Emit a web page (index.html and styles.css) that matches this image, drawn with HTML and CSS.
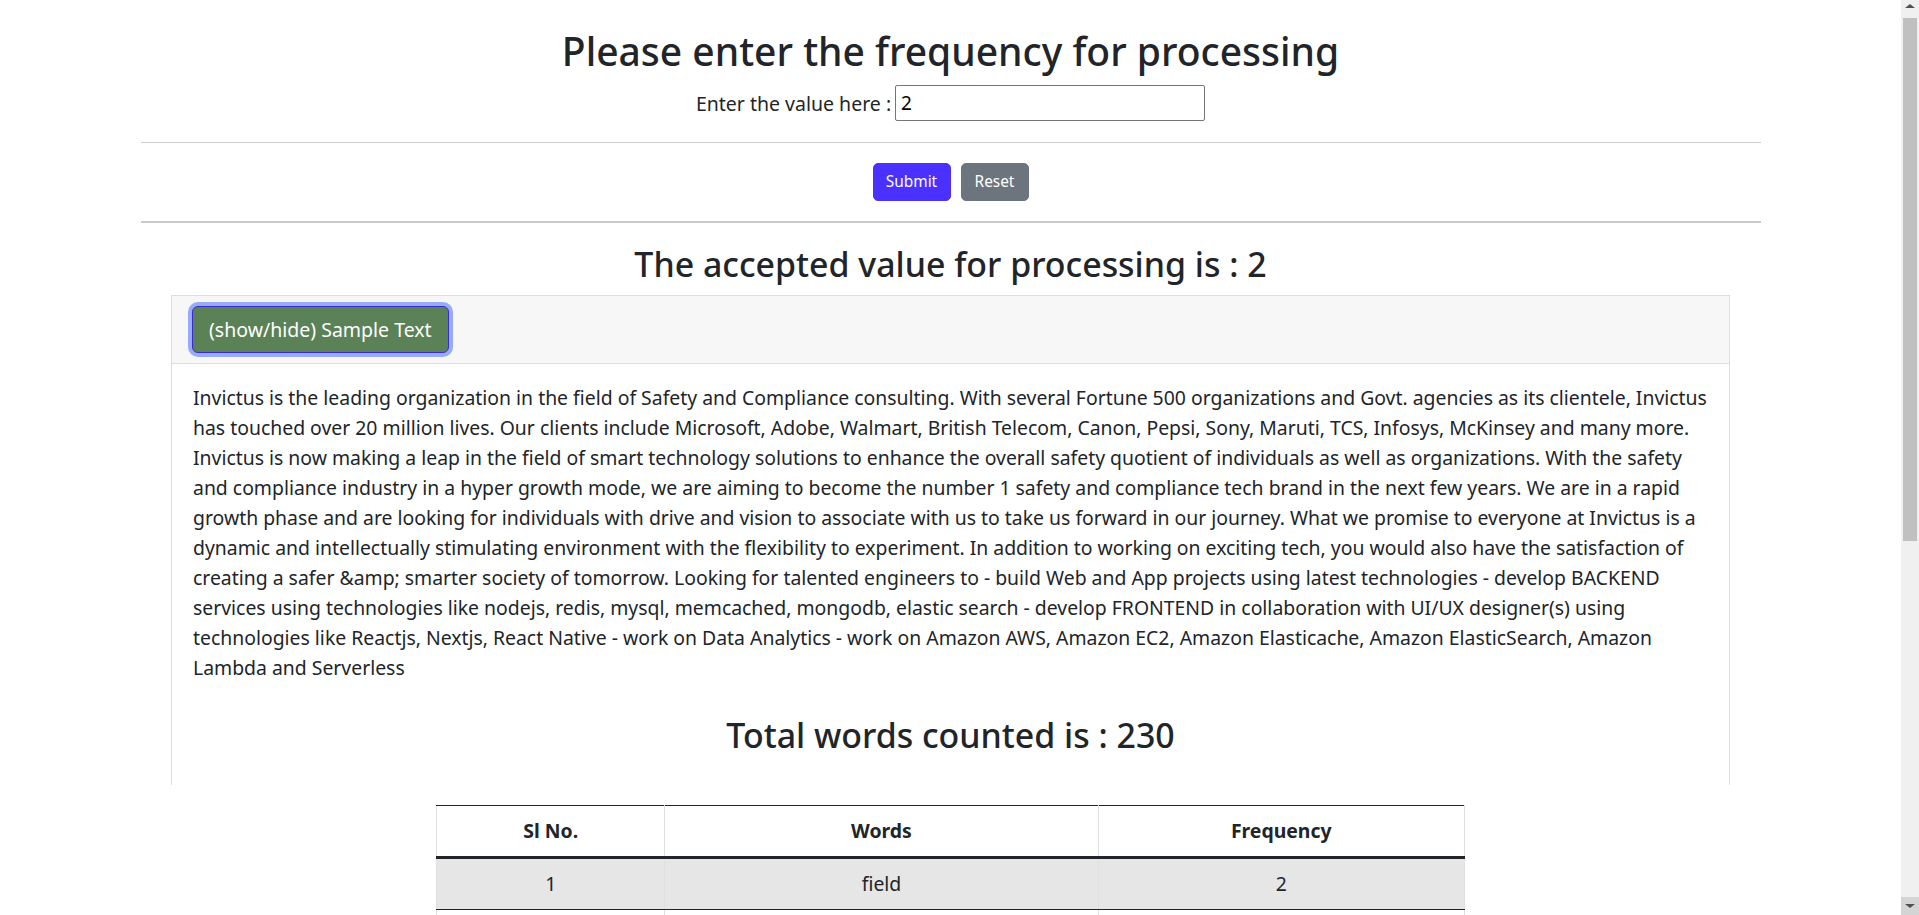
FILE: index.html
```html
<!DOCTYPE html>
<html lang="en">
<head>
<meta charset="utf-8">
<title>Word Frequency</title>
<link rel="stylesheet" href="styles.css">
</head>
<body>
<main class="page">
  <h1 class="title">Please enter the frequency for processing</h1>
  <div class="field-row">
    <label class="field-label" for="freq">Enter the value here :</label>
    <input id="freq" class="freq-input" type="text" value="2">
  </div>
  <hr class="rule rule-thin">
  <div class="actions">
    <button class="btn btn-submit" type="button">Submit</button>
    <button class="btn btn-reset" type="button">Reset</button>
  </div>
  <hr class="rule rule-thick">
  <h2 class="subtitle">The accepted value for processing is : 2</h2>
  <section class="card">
    <div class="card-header">
      <button class="btn-toggle" type="button">(show/hide) Sample Text</button>
    </div>
    <div class="card-body">
      <p class="sample">Invictus is the leading organization in the field of Safety and Compliance consulting. With several Fortune 500 organizations and Govt. agencies as its clientele, Invictus<br>
has touched over 20 million lives. Our clients include Microsoft, Adobe, Walmart, British Telecom, Canon, Pepsi, Sony, Maruti, TCS, Infosys, McKinsey and many more.<br>
Invictus is now making a leap in the field of smart technology solutions to enhance the overall safety quotient of individuals as well as organizations. With the safety<br>
and compliance industry in a hyper growth mode, we are aiming to become the number 1 safety and compliance tech brand in the next few years. We are in a rapid<br>
growth phase and are looking for individuals with drive and vision to associate with us to take us forward in our journey. What we promise to everyone at Invictus is a<br>
dynamic and intellectually stimulating environment with the flexibility to experiment. In addition to working on exciting tech, you would also have the satisfaction of<br>
creating a safer &amp;amp; smarter society of tomorrow. Looking for talented engineers to - build Web and App projects using latest technologies - develop BACKEND<br>
services using technologies like nodejs, redis, mysql, memcached, mongodb, elastic search - develop FRONTEND in collaboration with UI/UX designer(s) using<br>
technologies like Reactjs, Nextjs, React Native - work on Data Analytics - work on Amazon AWS, Amazon EC2, Amazon Elasticache, Amazon ElasticSearch, Amazon<br>
Lambda and Serverless</p>
      <h2 class="total">Total words counted is : 230</h2>
    </div>
  </section>
  <table class="freq-table">
    <thead>
      <tr><th class="col-no">Sl No.</th><th class="col-word">Words</th><th class="col-freq">Frequency</th></tr>
    </thead>
    <tbody>
      <tr><td>1</td><td>field</td><td>2</td></tr>
      <tr><td>2</td><td>With</td><td>2</td></tr>
      <tr><td>3</td><td>individuals</td><td>2</td></tr>
      <tr><td>4</td><td>compliance</td><td>2</td></tr>
      <tr><td>5</td><td>growth</td><td>2</td></tr>
      <tr><td>6</td><td>we</td><td>2</td></tr>
      <tr><td>7</td><td>for</td><td>2</td></tr>
      <tr><td>8</td><td>us</td><td>2</td></tr>
      <tr><td>9</td><td>develop</td><td>2</td></tr>
      <tr><td>10</td><td>like</td><td>2</td></tr>
      <tr><td>11</td><td>work</td><td>2</td></tr>
    </tbody>
  </table>
</main>
<div class="scrollbar" aria-hidden="true">
  <span class="sb-btn sb-up"></span>
  <span class="sb-track"><span class="sb-thumb"></span></span>
  <span class="sb-btn sb-down"></span>
</div>
</body>
</html>
```
FILE: styles.css
```css
html { background: #fff; }
body {
  margin: 0;
  color: #212529;
  font-family: "Noto Sans", "Open Sans", sans-serif;
  font-size: 19.4px;
}

.page {
  margin-right: 18px;
  padding-bottom: 110px;
  text-align: center;
}

/* window scrollbar as shown in the capture */
.scrollbar {
  position: fixed;
  top: 0;
  right: 0;
  width: 18px;
  height: 100vh;
  background: #f0f0f0;
  display: flex;
  flex-direction: column;
}
.sb-btn {
  flex: none;
  height: 18px;
  display: flex;
  align-items: center;
  justify-content: center;
}
.sb-up { align-items: flex-start; padding-top: 4px; box-sizing: border-box; }
.sb-up::before {
  content: "";
  border-left: 5px solid transparent;
  border-right: 5px solid transparent;
  border-bottom: 4px solid #505050;
}
.sb-down { background: #d4d4d4; }
.sb-down::before {
  content: "";
  border-left: 5px solid transparent;
  border-right: 5px solid transparent;
  border-top: 4px solid #505050;
}
.sb-track {
  flex: 1;
  padding: 0 2px;
}
.sb-thumb {
  display: block;
  height: 523px;
  background: #c0c0c0;
}

.title {
  margin: 27px 0 0;
  font-size: 39px;
  line-height: 48px;
  font-weight: 500;
}

.field-row {
  margin-top: 10px;
  display: flex;
  justify-content: center;
  align-items: center;
  gap: 4px;
  height: 36px;
}
.field-label { font-size: 19.5px; }
.freq-input {
  box-sizing: border-box;
  width: 310px;
  height: 36px;
  padding: 0 5px;
  border: 1px solid #767676;
  border-radius: 2px;
  font-family: "Noto Sans", sans-serif;
  font-size: 19px;
  color: #000;
  background: #fff;
}

.rule {
  width: 1620px;
  margin: 21px auto 0;
  border: 0;
  border-top: 1px solid #cccccc;
  height: 0;
}
.rule-thick {
  margin-top: 20px;
  border-top: 2px solid #c9c9c9;
}

.actions {
  margin-top: 20px;
  display: flex;
  justify-content: center;
  gap: 10px;
}
.btn {
  box-sizing: border-box;
  height: 38px;
  padding: 0 12px;
  border: 1px solid transparent;
  border-radius: 5px;
  font-family: "Noto Sans", sans-serif;
  font-size: 15.4px;
  line-height: 36px;
  color: #fff;
}
.btn-submit { background: #4b31fd; border-color: #4b31fd; min-width: 78px; }
.btn-reset { background: #6c757d; border-color: #6c757d; min-width: 68px; }

.subtitle, .total {
  font-size: 33.9px;
  line-height: 38px;
  font-weight: 500;
}
.subtitle { margin: 22px 0 0; }

.card {
  width: 1559px;
  box-sizing: border-box;
  margin: 12px auto 0;
  border: 1px solid #dedede;
  border-bottom: 0;
  text-align: left;
}
.card-header {
  padding: 10px 20px;
  background: #f7f7f7;
  border-bottom: 1px solid #dedede;
  display: flex;
}
.btn-toggle {
  box-sizing: border-box;
  height: 47px;
  padding: 0 16px;
  background: #5b8157;
  border: 1px solid #3a2bd0;
  border-radius: 6px;
  box-shadow: 0 0 0 4px #98abf9;
  color: #fff;
  font-family: "Noto Sans", sans-serif;
  font-size: 19.5px;
  line-height: 45px;
}
.card-body {
  padding: 19px 21px 31px;
}
.sample {
  margin: 0;
  line-height: 30px;
  white-space: nowrap;
}
.total {
  margin: 33px 0 0;
  text-align: center;
}

.freq-table {
  margin: 20px auto 0;
  width: 1029px;
  border-collapse: collapse;
  font-size: 19.4px;
}
.col-no { width: 224px; }
.col-word { width: 438px; }
.col-freq { width: 367px; }
.freq-table th, .freq-table td {
  padding: 10px 8px;
  line-height: 30px;
  border-left: 1px solid #e0e0e0;
  border-right: 1px solid #e0e0e0;
  border-bottom: 1px solid #212529;
  text-align: center;
}
.freq-table th {
  font-weight: 700;
  border-top: 1px solid #212529;
  border-bottom: 3px solid #212529;
}
.freq-table tbody tr:nth-child(odd) td { background: #e6e6e6; }
```
